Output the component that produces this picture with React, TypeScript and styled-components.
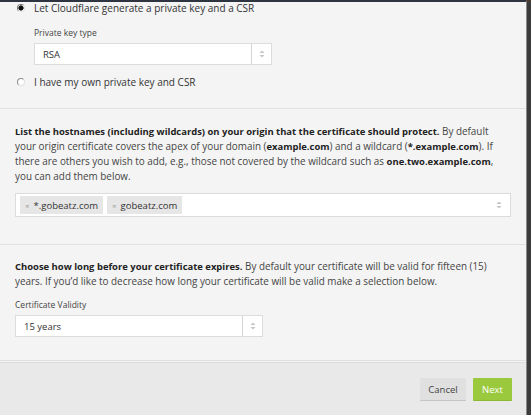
import React from "react";
import styled, { createGlobalStyle } from "styled-components";

const Global = createGlobalStyle`
  html, body { margin: 0; padding: 0; background: #f4f4f4; }
  body { font-family: "Open Sans", "Noto Sans", sans-serif; color: #333; }
  * { box-sizing: border-box; }
`;

const Page = styled.div`
  display: flex;
  width: 531px;
  height: 415px;
  overflow: hidden;
`;

const Panel = styled.div`
  flex: 1;
  display: flex;
  flex-direction: column;
  background: #f4f4f4;
  border-top: 2px solid #2f3540;
`;

const SideStrip = styled.div`
  width: 5px;
  background: #3b3b3b;
  border-left: 1px solid #8a8a8a;
  border-top: 2px solid #4a3a30;
`;

const Section = styled.div<{ $pt: number; $pb: number; $pl: number }>`
  padding: ${(p) => p.$pt}px 17px ${(p) => p.$pb}px ${(p) => p.$pl}px;
  border-bottom: 1px solid #e1e1e1;
`;

const RadioRow = styled.label<{ $mt?: number }>`
  display: flex;
  align-items: center;
  gap: 9px;
  height: 12px;
  margin-top: ${(p) => p.$mt ?? 0}px;
  font-size: 10px;
  line-height: 12px;
  color: #333;
`;

const RadioDot = styled.span<{ $checked?: boolean }>`
  width: 8px;
  height: 8px;
  border-radius: 50%;
  flex: none;
  background: ${(p) =>
    p.$checked
      ? "radial-gradient(circle, #111 0 2.4px, #fff 2.8px)"
      : "#fdfdfd"};
  border: 1px solid ${(p) => (p.$checked ? "#777" : "#8f8f8f")};
  border-right-color: #e2e2e2;
  border-bottom-color: #e2e2e2;
`;

const Field = styled.div<{ $indent?: number; $mt?: number }>`
  display: flex;
  flex-direction: column;
  gap: 4px;
  padding-left: ${(p) => p.$indent ?? 0}px;
  margin-top: ${(p) => p.$mt ?? 0}px;
`;

const FieldLabel = styled.div`
  font-size: 8.5px;
  line-height: 12px;
  color: #444;
`;

const SelectBox = styled.div<{ $w: number }>`
  display: flex;
  width: ${(p) => p.$w}px;
  height: 22px;
  background: #fff;
  border: 1px solid #dcdcdc;
`;

const SelectValue = styled.div`
  flex: 1;
  display: flex;
  align-items: center;
  padding-left: 8px;
  font-size: 9.5px;
  color: #333;
`;

const SelectArrows = styled.div`
  width: 20px;
  border-left: 1px solid #d4d4d4;
  display: flex;
  align-items: center;
  justify-content: center;
`;

const Arrows = () => (
  <svg width="6" height="8" viewBox="0 0 6 8">
    <path d="M3 0.5 L5.5 3 L0.5 3 Z" fill="#c4c4c4" />
    <path d="M3 7.5 L5.5 5 L0.5 5 Z" fill="#c4c4c4" />
  </svg>
);

const Para = styled.p`
  margin: 0;
  font-size: 9.9px;
  line-height: 15px;
  color: #444;
  b { color: #222; font-weight: 700; font-size: 9.45px; }
`;

const TagInput = styled.div`
  display: flex;
  align-items: center;
  gap: 4px;
  height: 24px;
  margin-top: 9px;
  margin-right: -2px;
  padding: 0 8px 0 4px;
  background: #fff;
  border: 1px solid #dcdcdc;
`;

const Tag = styled.span`
  display: inline-flex;
  align-items: center;
  gap: 4px;
  height: 18px;
  padding: 0 5px;
  background: #e6e6e6;
  font-size: 9.5px;
  color: #333;
`;

const TagX = styled.span`
  font-size: 8px;
  color: #999;
`;

const Spacer = styled.div`
  flex: 1;
`;

const Footer = styled.div`
  margin-top: auto;
  display: flex;
  justify-content: flex-end;
  gap: 7px;
  height: 53px;
  padding: 15px 14px 0 0;
  background: #e9e9e9;
  border-top: 1px solid #dcdcdc;
`;

const Button = styled.button<{ $primary?: boolean; $w: number }>`
  width: ${(p) => p.$w}px;
  height: 23px;
  border: none;
  border-radius: 1px;
  font-family: inherit;
  font-size: 9.5px;
  background: ${(p) => (p.$primary ? "#9bc93e" : "#e0e0e0")};
  color: ${(p) => (p.$primary ? "#fff" : "#444")};
  border-bottom: 1px solid ${(p) => (p.$primary ? "#8cb934" : "#c6c6c6")};
`;

export default function App() {
  return (
    <Page>
      <Global />
      <Panel>
        <Section $pt={0} $pb={20} $pl={17}>
          <RadioRow>
            <RadioDot $checked />
            Let Cloudflare generate a private key and a CSR
          </RadioRow>
          <Field $indent={17} $mt={13}>
            <FieldLabel>Private key type</FieldLabel>
            <SelectBox $w={238}>
              <SelectValue>RSA</SelectValue>
              <SelectArrows>
                <Arrows />
              </SelectArrows>
            </SelectBox>
          </Field>
          <RadioRow $mt={11}>
            <RadioDot />
            I have my own private key and CSR
          </RadioRow>
        </Section>
        <Section $pt={15} $pb={27} $pl={15}>
          <Para>
            <b>
              List the hostnames (including wildcards) on your origin that the
              certificate should protect.
            </b>{" "}
            By default your origin certificate covers the apex of your domain (
            <b>example.com</b>) and a wildcard (<b>*.example.com</b>). If there
            are others you wish to add, e.g., those not covered by the wildcard
            such as <b>one.two.example.com</b>, you can add them below.
          </Para>
          <TagInput>
            <Tag>
              <TagX>×</TagX>*.gobeatz.com
            </Tag>
            <Tag>
              <TagX>×</TagX>gobeatz.com
            </Tag>
            <Spacer />
            <Arrows />
          </TagInput>
        </Section>
        <Section $pt={14} $pb={23} $pl={15}>
          <Para>
            <b>Choose how long before your certificate expires.</b> By default
            your certificate will be valid for fifteen (15) years. If you’d like
            to decrease how long your certificate will be valid make a selection
            below.
          </Para>
          <Field $mt={10}>
            <FieldLabel>Certificate Validity</FieldLabel>
            <SelectBox $w={248}>
              <SelectValue>15 years</SelectValue>
              <SelectArrows>
                <Arrows />
              </SelectArrows>
            </SelectBox>
          </Field>
        </Section>
        <Footer>
          <Button $w={46}>Cancel</Button>
          <Button $primary $w={39}>Next</Button>
        </Footer>
      </Panel>
      <SideStrip />
    </Page>
  );
}
